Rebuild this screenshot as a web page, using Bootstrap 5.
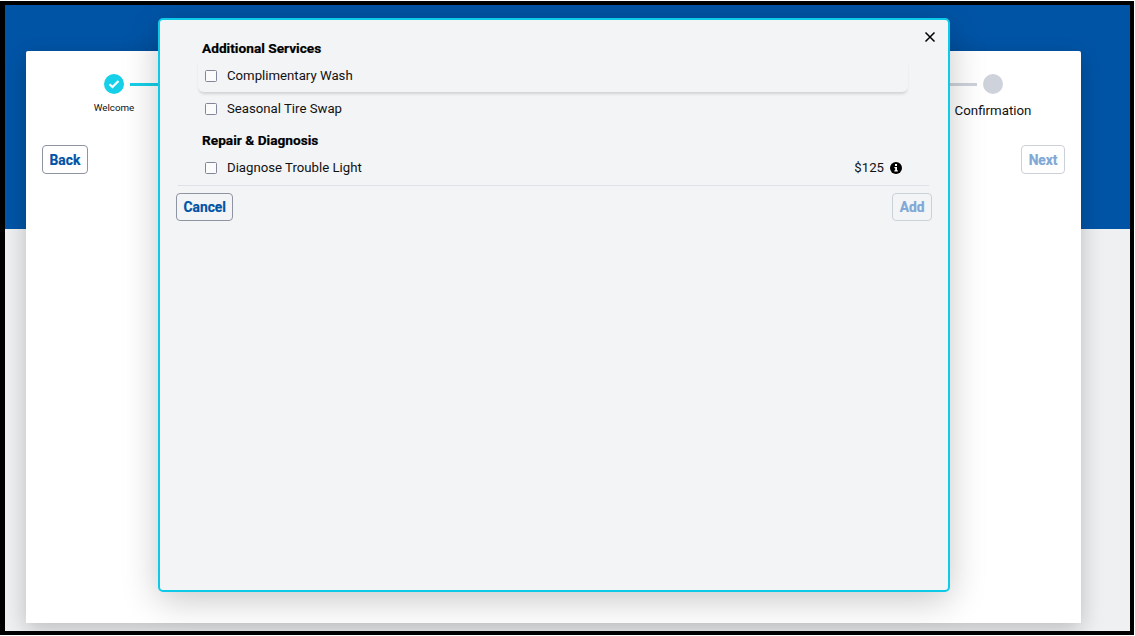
<!DOCTYPE html>
<html lang="en">
<head>
<meta charset="utf-8">
<title>Service selection</title>
<link href="https://cdn.jsdelivr.net/npm/bootstrap@5.3.0/dist/css/bootstrap.min.css" rel="stylesheet">
<style>
html,body{margin:0;height:636px;overflow:hidden;background:#fff;font-family:Roboto,"Liberation Sans",sans-serif;color:#111;}
.shot-frame{position:relative;width:1134px;height:634px;border:solid #000;border-width:4px 4px 4px 5px;margin-top:1px;background:linear-gradient(#0054a6 0 224px,#eff0f2 224px);overflow:hidden;}
.wizard-card{width:1055px;height:572px;margin:46px 0 0 21px;background:#fff;border-radius:2px 2px 0 0;box-shadow:0 6px 22px rgba(0,0,0,.22);padding:23px 16px 0;}
.stepper{height:71px;padding-left:34px;padding-right:32px;}
.step-welcome{width:76px;margin-right:-22px;}
.dot{width:20px;height:20px;border-radius:50%;flex:none;}
.dot-done{background:#16cfe8;}
.dot-todo{background:#ced2da;}
.step-line{height:3px;margin-top:9px;flex:1 1 auto;background:linear-gradient(90deg,#16cfe8 0 50%,#ced2da 50%);}
.step-small{font-size:9.8px;margin-top:7px;line-height:13px;}
.step-big{font-size:13.3px;margin-top:8px;line-height:18px;}
.step-last{width:80px;margin-left:-24px;}
.wiz-btn{font-family:Roboto,"Liberation Sans",sans-serif;font-weight:700;font-size:13.8px;line-height:18px;color:#0054a6;background:#fff;border:1px solid #8f94a3;border-radius:4px;padding:4px 6.5px;height:29px;-webkit-text-stroke:.2px #0054a6;}
.wiz-btn:disabled{opacity:1;color:#7fa8d6;border-color:#ccd0d8;-webkit-text-stroke:.2px #7fa8d6;}
.modal-btn{height:28px;background:#f3f4f6;}
.modal-btn:disabled{background:#f3f4f6;}
.sheet{position:absolute;left:153px;top:13px;width:792px;height:574px;background:#f3f4f6;border:2px solid #0ccae8;border-radius:5px;box-shadow:0 8px 36px rgba(0,0,0,.22);padding:0 16px;}
.close-x{position:absolute;right:11px;top:10px;width:14px;height:14px;padding:0;background:none;border:0;line-height:0;}
.list-zone{padding:19px 24px 0 22px;}
.section-head{font-size:13.7px;font-weight:700;line-height:19px;margin:0 0 1px 4px;color:#000;-webkit-text-stroke:.2px #000;}
.svc-row{height:33px;padding:0 6px 0 7px;border-bottom-right-radius:6px;border-bottom-left-radius:6px;font-size:13.2px;}
.svc-lift{box-shadow:0 3px 3px -1px rgba(0,0,0,.14);}
.svc-plain{background:linear-gradient(#e2e4e8,#e2e4e8) left bottom/3px 1px no-repeat,linear-gradient(#e2e4e8,#e2e4e8) right bottom/3px 1px no-repeat;}
.svc-last{height:34px;}
.tick{width:12px;height:12px;border:1.5px solid #83869a;border-radius:1.5px;background:#fbfbfc;margin-right:10px;flex:none;}
.sect-2{margin-top:6px;}
.info{margin-left:6px;display:block;}
.sheet-rule{border-top:1px solid #dfe1e6;margin:0 3px 0 2px;}
.sheet-foot{padding:7px 0 0;}
</style>
</head>
<body>
<div class="shot-frame">
  <div class="wizard-card">
    <div class="stepper d-flex">
      <div class="step-welcome d-flex flex-column align-items-center text-center">
        <div class="dot dot-done d-flex align-items-center justify-content-center">
          <svg width="12" height="10" viewBox="0 0 12 10" aria-hidden="true"><path d="M1.5 5.2 4.5 8 10.5 2" fill="none" stroke="#fff" stroke-width="2.2"/></svg>
        </div>
        <div class="step-small">Welcome</div>
      </div>
      <div class="step-line"></div>
      <div class="step-last d-flex flex-column align-items-center text-center">
        <div class="dot dot-todo"></div>
        <div class="step-big">Confirmation</div>
      </div>
    </div>
    <div class="d-flex justify-content-between">
      <button type="button" class="btn wiz-btn">Back</button>
      <button type="button" class="btn wiz-btn" disabled>Next</button>
    </div>
  </div>

  <div class="sheet">
    <button type="button" class="close-x" aria-label="Close">
      <svg width="14" height="14" viewBox="0 0 14 14" aria-hidden="true"><path d="M2.5 2.5 11.5 11.5M11.5 2.5 2.5 11.5" stroke="#000" stroke-width="1.5" fill="none"/></svg>
    </button>
    <div class="list-zone">
      <div class="section-head">Additional Services</div>
      <div class="svc-row svc-lift d-flex align-items-center"><span class="tick"></span><span>Complimentary Wash</span></div>
      <div class="svc-row svc-plain d-flex align-items-center"><span class="tick"></span><span>Seasonal Tire Swap</span></div>
      <div class="section-head sect-2">Repair &amp; Diagnosis</div>
      <div class="svc-row svc-last d-flex align-items-center"><span class="tick"></span><span>Diagnose Trouble Light</span>
        <span class="ms-auto">$125</span>
        <svg class="info" width="12" height="12" viewBox="0 0 12 12" aria-hidden="true"><circle cx="6" cy="6" r="6" fill="#000"/><rect x="5" y="2" width="2" height="2" fill="#fff"/><path d="M4.4 5h2.6v3.2h.8V9.6H4.4V8.2h.8V6.3h-.8z" fill="#fff"/></svg>
      </div>
    </div>
    <div class="sheet-rule"></div>
    <div class="sheet-foot d-flex justify-content-between">
      <button type="button" class="btn wiz-btn modal-btn">Cancel</button>
      <button type="button" class="btn wiz-btn modal-btn" disabled>Add</button>
    </div>
  </div>
</div>
<script src="https://cdn.jsdelivr.net/npm/bootstrap@5.3.0/dist/js/bootstrap.bundle.min.js"></script>
</body>
</html>
